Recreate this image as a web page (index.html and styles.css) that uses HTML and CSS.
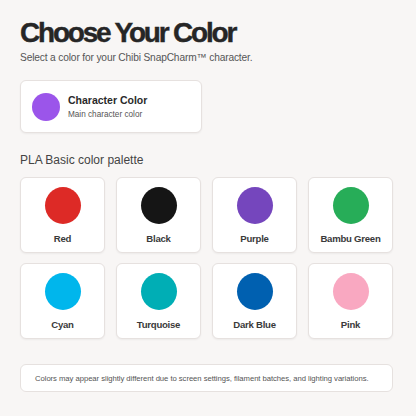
FILE: index.html
```html
<!DOCTYPE html>
<html>
<head>
<meta charset="utf-8">
<link rel="stylesheet" href="styles.css">
</head>
<body>
<main class="page">
  <h1 class="title">Choose Your Color</h1>
  <p class="subtitle">Select a color for your Chibi SnapCharm™ character.</p>

  <div class="char-card">
    <span class="char-swatch"></span>
    <div class="char-text">
      <div class="char-title">Character Color</div>
      <div class="char-sub">Main character color</div>
    </div>
  </div>

  <h2 class="section">PLA Basic color palette</h2>

  <div class="grid">
    <div class="swatch-card"><span class="dot red"></span><span class="label">Red</span></div>
    <div class="swatch-card"><span class="dot black"></span><span class="label">Black</span></div>
    <div class="swatch-card"><span class="dot purple"></span><span class="label">Purple</span></div>
    <div class="swatch-card"><span class="dot green"></span><span class="label">Bambu Green</span></div>
    <div class="swatch-card"><span class="dot cyan"></span><span class="label">Cyan</span></div>
    <div class="swatch-card"><span class="dot turquoise"></span><span class="label">Turquoise</span></div>
    <div class="swatch-card"><span class="dot darkblue"></span><span class="label">Dark Blue</span></div>
    <div class="swatch-card"><span class="dot pink"></span><span class="label">Pink</span></div>
  </div>

  <div class="note">Colors may appear slightly different due to screen settings, filament batches, and lighting variations.</div>
</main>
</body>
</html>
```
FILE: styles.css
```css
html, body {
  margin: 0;
  padding: 0;
  background: #f8f6f5;
}
body {
  font-family: "Liberation Sans", Arial, sans-serif;
  color: #2a2a2a;
}
.page {
  padding: 16px 23px 0 20px;
  display: flex;
  flex-direction: column;
}
.title {
  margin: 0;
  font-size: 28px;
  font-weight: 700;
  letter-spacing: -2.2px;
  line-height: 34px;
  color: #262626;
  -webkit-text-stroke: 0.4px #262626;
}
.subtitle {
  margin: 1px 0 0;
  font-size: 10.2px;
  letter-spacing: -0.15px;
  line-height: 13px;
  color: #555;
}
.char-card {
  margin-top: 16px;
  width: 182px;
  height: 53px;
  box-sizing: border-box;
  background: #fff;
  border: 1px solid #e6e1df;
  border-radius: 6px;
  box-shadow: 0 1px 2px rgba(0,0,0,0.05);
  display: flex;
  align-items: center;
  padding-left: 11px;
  gap: 8px;
}
.char-swatch {
  width: 28px;
  height: 28px;
  border-radius: 50%;
  background: #9b55ea;
  flex: none;
}
.char-title {
  font-size: 10.5px;
  font-weight: 700;
  color: #2a2a2a;
  line-height: 13px;
}
.char-sub {
  font-size: 8.2px;
  color: #555;
  line-height: 10px;
  margin-top: 3px;
}
.section {
  margin: 20px 0 0;
  font-size: 12px;
  font-weight: 400;
  line-height: 15px;
  color: #444;
}
.grid {
  margin-top: 9px;
  display: grid;
  grid-template-columns: repeat(4, 85px);
  column-gap: 11px;
  row-gap: 10px;
}
.swatch-card {
  height: 76px;
  box-sizing: border-box;
  background: #fff;
  border: 1px solid #e6e1df;
  border-radius: 6px;
  box-shadow: 0 1px 2px rgba(0,0,0,0.05);
  display: flex;
  flex-direction: column;
  align-items: center;
  padding-top: 9px;
}
.dot {
  width: 36px;
  height: 37px;
  border-radius: 50%;
  flex: none;
}
.label {
  margin-top: 8px;
  font-size: 9.6px;
  font-weight: 700;
  letter-spacing: -0.25px;
  color: #3a3a3a;
  line-height: 13px;
}
.red { background: #dd2a26; }
.black { background: #151515; }
.purple { background: #7546bd; }
.green { background: #27ad58; }
.cyan { background: #00b6ec; }
.turquoise { background: #00aeb5; }
.darkblue { background: #0060b0; }
.pink { background: #f9a8c1; }
.note {
  margin-top: 25px;
  width: 373px;
  height: 28px;
  box-sizing: border-box;
  background: #fff;
  border: 1px solid #e6e1df;
  border-radius: 6px;
  display: flex;
  align-items: center;
  padding-left: 14px;
  font-size: 7.7px;
  letter-spacing: -0.05px;
  color: #555;
  white-space: nowrap;
}
```
